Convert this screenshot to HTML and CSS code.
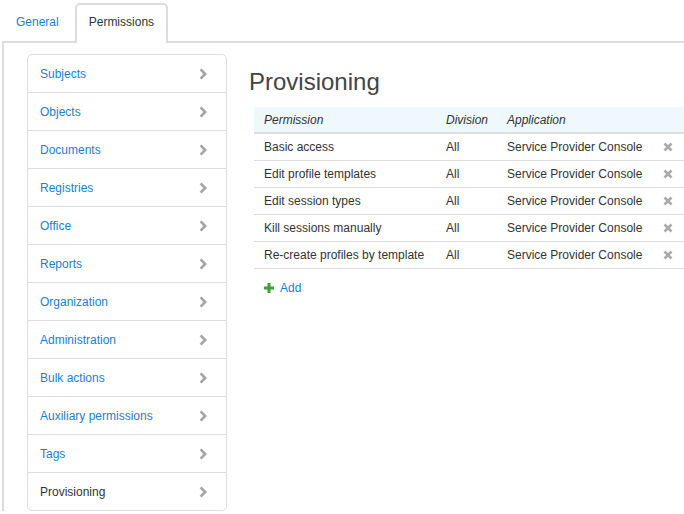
FILE: index.html
```html
<!DOCTYPE html>
<html lang="en">

<head>
    <meta charset="UTF-8">
    <title>Permissions</title>
    <link rel="stylesheet" href="styles.css">
</head>

<body>

    <ul class="tabs">
        <li class="tab"><a href="#">General</a></li>
        <li class="tab active"><a href="#">Permissions</a></li>
    </ul>

    <div class="tab-content">
        <ul class="side-menu">
            <li><a href="#">Subjects</a><svg class="chevron" viewBox="0 0 8 12"><polyline points="1.6,1.4 6.2,6 1.6,10.6" /></svg></li>
            <li><a href="#">Objects</a><svg class="chevron" viewBox="0 0 8 12"><polyline points="1.6,1.4 6.2,6 1.6,10.6" /></svg></li>
            <li><a href="#">Documents</a><svg class="chevron" viewBox="0 0 8 12"><polyline points="1.6,1.4 6.2,6 1.6,10.6" /></svg></li>
            <li><a href="#">Registries</a><svg class="chevron" viewBox="0 0 8 12"><polyline points="1.6,1.4 6.2,6 1.6,10.6" /></svg></li>
            <li><a href="#">Office</a><svg class="chevron" viewBox="0 0 8 12"><polyline points="1.6,1.4 6.2,6 1.6,10.6" /></svg></li>
            <li><a href="#">Reports</a><svg class="chevron" viewBox="0 0 8 12"><polyline points="1.6,1.4 6.2,6 1.6,10.6" /></svg></li>
            <li><a href="#">Organization</a><svg class="chevron" viewBox="0 0 8 12"><polyline points="1.6,1.4 6.2,6 1.6,10.6" /></svg></li>
            <li><a href="#">Administration</a><svg class="chevron" viewBox="0 0 8 12"><polyline points="1.6,1.4 6.2,6 1.6,10.6" /></svg></li>
            <li><a href="#">Bulk actions</a><svg class="chevron" viewBox="0 0 8 12"><polyline points="1.6,1.4 6.2,6 1.6,10.6" /></svg></li>
            <li><a href="#">Auxiliary permissions</a><svg class="chevron" viewBox="0 0 8 12"><polyline points="1.6,1.4 6.2,6 1.6,10.6" /></svg></li>
            <li><a href="#">Tags</a><svg class="chevron" viewBox="0 0 8 12"><polyline points="1.6,1.4 6.2,6 1.6,10.6" /></svg></li>
            <li class="current"><a href="#">Provisioning</a><svg class="chevron" viewBox="0 0 8 12"><polyline points="1.6,1.4 6.2,6 1.6,10.6" /></svg></li>
        </ul>

        <div class="main">
            <h1>Provisioning</h1>

            <table class="perm-table">
                <thead>
                    <tr>
                        <th class="col-perm">Permission</th>
                        <th class="col-div">Division</th>
                        <th class="col-app">Application</th>
                        <th class="col-del"></th>
                    </tr>
                </thead>
                <tbody>
                    <tr>
                        <td>Basic access</td>
                        <td>All</td>
                        <td>Service Provider Console</td>
                        <td><svg class="remove" viewBox="0 0 10 10"><path d="M1.5 1.5 L8.5 8.5 M8.5 1.5 L1.5 8.5" /></svg></td>
                    </tr>
                    <tr>
                        <td>Edit profile templates</td>
                        <td>All</td>
                        <td>Service Provider Console</td>
                        <td><svg class="remove" viewBox="0 0 10 10"><path d="M1.5 1.5 L8.5 8.5 M8.5 1.5 L1.5 8.5" /></svg></td>
                    </tr>
                    <tr>
                        <td>Edit session types</td>
                        <td>All</td>
                        <td>Service Provider Console</td>
                        <td><svg class="remove" viewBox="0 0 10 10"><path d="M1.5 1.5 L8.5 8.5 M8.5 1.5 L1.5 8.5" /></svg></td>
                    </tr>
                    <tr>
                        <td>Kill sessions manually</td>
                        <td>All</td>
                        <td>Service Provider Console</td>
                        <td><svg class="remove" viewBox="0 0 10 10"><path d="M1.5 1.5 L8.5 8.5 M8.5 1.5 L1.5 8.5" /></svg></td>
                    </tr>
                    <tr>
                        <td>Re-create profiles by template</td>
                        <td>All</td>
                        <td>Service Provider Console</td>
                        <td><svg class="remove" viewBox="0 0 10 10"><path d="M1.5 1.5 L8.5 8.5 M8.5 1.5 L1.5 8.5" /></svg></td>
                    </tr>
                </tbody>
            </table>

            <a class="add-link" href="#"><svg class="plus" viewBox="0 0 10 10"><path d="M5 0 V10 M0 5 H10" /></svg>Add</a>
        </div>
    </div>

</body>

</html>
```

FILE: styles.css
```css
html,
body {
    margin: 0;
    padding: 0;
    overflow: hidden;
    font-family: "Liberation Sans", Arial, sans-serif;
    font-size: 12px;
    color: #333;
    background-color: #fff;
}

a {
    color: #1a7fd1;
    text-decoration: none;
}

/* tabs on top */
.tabs {
    display: flex;
    list-style: none;
    margin: 0;
    padding: 3px 0 0 2px;
}

.tab {
    box-sizing: border-box;
    height: 40px;
    margin-right: 2px;
    margin-bottom: -2px;
    padding: 9px 12px 0;
    line-height: 16px;
    border: 2px solid transparent;
    border-bottom: none;
    border-radius: 5px 5px 0 0;
    position: relative;
}

.tab.active {
    border-color: #ddd;
    background-color: #fff;
}

.tab.active a {
    color: #333;
}

.tab-content {
    display: flex;
    align-items: flex-start;
    margin-left: 2px;
    border-top: 2px solid #ddd;
    border-left: 2px solid #ddd;
    padding: 11px 0 0 23px;
}

/* left menu */
.side-menu {
    list-style: none;
    margin: 0;
    padding: 0;
    width: 200px;
    box-sizing: border-box;
    border: 1px solid #ddd;
    border-radius: 5px;
    flex-shrink: 0;
}

.side-menu li {
    display: flex;
    align-items: center;
    justify-content: space-between;
    height: 37px;
    padding: 0 19px 0 12px;
    border-bottom: 1px solid #ddd;
    line-height: 16px;
}

.side-menu li:last-child {
    border-bottom: none;
}

.side-menu li.current a {
    color: #333;
}

.chevron {
    width: 8px;
    height: 12px;
    fill: none;
    stroke: #a5a5a5;
    stroke-width: 2.6;
}

/* right side */
.main {
    margin-left: 22px;
    flex: 1;
    min-width: 0;
}

h1 {
    margin: 15px 0 12px;
    font-size: 24px;
    line-height: 26px;
    font-weight: normal;
    color: #444;
}

.perm-table {
    margin-left: 5px;
    width: 430px;
    border-collapse: collapse;
    table-layout: fixed;
}

.perm-table th {
    height: 25px;
    padding: 0 10px;
    text-align: left;
    font-weight: normal;
    font-style: italic;
    background-color: #eef8fd;
    border-bottom: 2px solid #ddd;
}

.perm-table td {
    height: 26px;
    padding: 0 10px;
    border-bottom: 1px solid #ddd;
    white-space: nowrap;
    line-height: 16px;
}

.col-perm {
    width: 162px;
}

.col-div {
    width: 41px;
}

.col-app {
    width: 136px;
}

.col-del {
    width: 11px;
}

.remove {
    display: block;
    width: 10px;
    height: 10px;
    fill: none;
    stroke: #aaa;
    stroke-width: 2.6;
}

.add-link {
    display: inline-flex;
    align-items: center;
    margin: 11px 0 0 15px;
    line-height: 16px;
}

.plus {
    width: 10px;
    height: 10px;
    margin-right: 6px;
    fill: none;
    stroke: #3f9c3f;
    stroke-width: 3;
}
```
